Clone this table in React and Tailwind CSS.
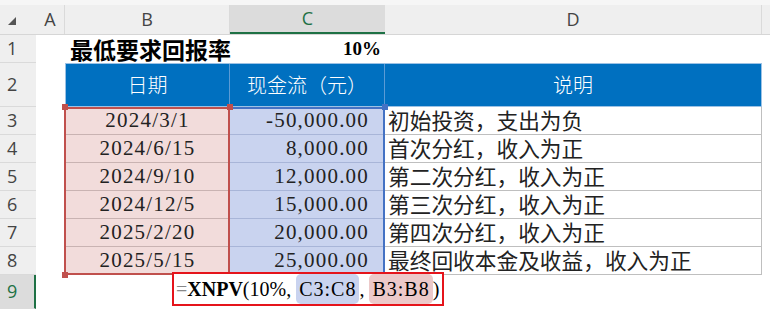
import React from "react";

const serif = "font-['Liberation_Serif','Noto_Sans_CJK_SC',serif]";
const cjk = "font-['Noto_Sans_CJK_SC',sans-serif]";
const ui = "font-['Open_Sans','Noto_Sans',sans-serif]";

const rows = [
  ["2024/3/1", "-50,000.00", "初始投资，支出为负"],
  ["2024/6/15", "8,000.00", "首次分红，收入为正"],
  ["2024/9/10", "12,000.00", "第二次分红，收入为正"],
  ["2024/12/5", "15,000.00", "第三次分红，收入为正"],
  ["2025/2/20", "20,000.00", "第四次分红，收入为正"],
  ["2025/5/15", "25,000.00", "最终回收本金及收益，收入为正"],
];

const RowHead = ({ n, h, active }) => (
  <div
    className={`w-[36px] shrink-0 flex items-center pl-[7px] text-[18px] ${ui} border-b ${
      active
        ? "bg-[#dcdcdc] text-[#1e7145] border-r-2 border-r-[#1e7145] border-b-[#dcdcdc]"
        : "bg-[#efefef] text-[#444] border-b-[#dadada]"
    }`}
    style={{ height: h }}
  >
    {n}
  </div>
);

const Handle = ({ className }) => (
  <div className={`absolute w-[6px] h-[6px] z-10 ${className}`} />
);

export default function App() {
  return (
    <div className="relative w-[770px] h-[309px] overflow-hidden bg-white">
      {/* top strip */}
      <div className="h-[5px] bg-[#f6f6f6]" />

      {/* column headers */}
      <div className={`flex h-[30px] bg-[#efefef] border-b border-[#d6d6d6] text-[18px] text-[#444] ${ui}`}>
        <div className="w-[36px] flex items-center pl-[8px]">
          <div className="w-0 h-0 border-l-[8px] border-l-transparent border-b-[8px] border-b-[#555] mt-[2px]" />
        </div>
        <div className="w-[29px] flex items-center justify-center border-r border-[#dadada]">A</div>
        <div className="w-[165px] flex items-center justify-center border-r border-[#dadada]">B</div>
        <div className="w-[155px] flex items-center justify-center bg-[#dcdcdc] text-[#1e7145] border-b-2 border-[#1e7145]">
          C
        </div>
        <div className="w-[377px] flex items-center justify-center border-r border-[#dadada]">D</div>
        <div className="flex-1" />
      </div>

      {/* row 1 */}
      <div className="flex h-[28px]">
        <RowHead n="1" h={28} />
        <div className="w-[29px]" />
        <div className={`w-[165px] flex items-center pl-[5px] text-[23px] font-bold text-black whitespace-nowrap ${cjk}`}>
          最低要求回报率
        </div>
        <div className={`w-[155px] flex items-center justify-end pr-[4px] text-[19px] font-bold text-black ${serif}`}>
          10%
        </div>
        <div className="flex-1" />
      </div>

      {/* row 2 header */}
      <div className="flex h-[44px]">
        <RowHead n="2" h={44} />
        <div className="w-[29px]" />
        <div className={`w-[697px] flex bg-[#0070c0] border border-[#9cc2e5] text-white text-[20px] font-light ${cjk}`}>
          <div className="w-[164px] flex items-center justify-center border-r border-[#5b9bd5]">日期</div>
          <div className="w-[155px] flex items-center justify-center border-r border-[#5b9bd5]">现金流（元）</div>
          <div className="flex-1 flex items-center justify-center">说明</div>
        </div>
        <div className="flex-1" />
      </div>

      {/* rows 3-8 */}
      <div className="flex h-[168px]">
        <div className="flex flex-col">
          {rows.map((r, i) => (
            <RowHead key={i} n={String(i + 3)} h={28} />
          ))}
        </div>
        <div className="w-[29px]" />
        <div className="relative w-[165px] bg-[#f2dcdb]">
          {rows.map((r, i) => (
            <div
              key={i}
              className={`h-[28px] flex items-center justify-center text-[21px] tracking-[1.2px] text-[#222] border-b border-[#c9b3b2] ${serif}`}
            >
              {r[0]}
            </div>
          ))}
          <div className="absolute inset-0 -left-px border-2 border-[#c0504d] z-[5]" />
          <Handle className="-left-[3px] -top-[3px] bg-[#c0504d]" />
          <Handle className="-right-[3px] -top-[3px] bg-[#c0504d]" />
          <Handle className="-left-[3px] -bottom-[3px] bg-[#c0504d]" />
        </div>
        <div className="relative w-[155px] bg-[#c9d3ef]">
          {rows.map((r, i) => (
            <div
              key={i}
              className={`h-[28px] flex items-center justify-end pr-[16px] text-[21px] tracking-[1.2px] text-[#222] border-b border-[#a8b5d8] ${serif}`}
            >
              {r[1]}
            </div>
          ))}
          <div className="absolute inset-0 border-y-2 border-r-2 border-[#4472c4]" />
          <Handle className="-right-[3px] -top-[3px] bg-[#4472c4]" />
        </div>
        <div className="w-[377px]">
          {rows.map((r, i) => (
            <div
              key={i}
              className={`h-[28px] flex items-center pl-[3px] text-[21.7px] text-[#222] whitespace-nowrap border-b border-r border-[#bfbfbf] ${cjk}`}
            >
              {r[2]}
            </div>
          ))}
        </div>
        <div className="flex-1" />
      </div>

      {/* row 9 */}
      <div className="flex h-[34px]">
        <RowHead n="9" h={34} active />
        <div className="flex-1" />
      </div>

      {/* formula being edited */}
      <div
        className={`absolute left-[172px] top-[272px] w-[272px] h-[34px] z-20 bg-white border-2 border-[#e5141b] flex items-center pl-[2px] text-[20px] text-black whitespace-nowrap ${serif}`}
      >
        <span className="text-[#888] font-light">=</span>
        <span className="font-bold">XNPV</span>
        <span>(10%,&nbsp;</span>
        <span className="bg-[#c9d3ef] rounded-[5px] px-[3px] tracking-[1px]">C3:C8</span>
        <span>,&nbsp;</span>
        <span className="bg-[#ecc9c9] rounded-[5px] px-[3px] tracking-[1px]">B3:B8</span>
        <span>)</span>
      </div>
    </div>
  );
}
